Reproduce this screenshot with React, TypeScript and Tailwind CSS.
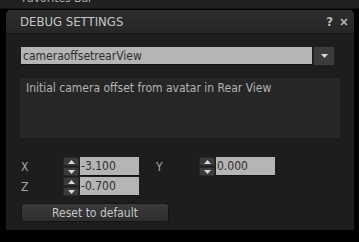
const font = { fontFamily: '"DejaVu Sans Condensed", "DejaVu Sans", sans-serif', fontStretch: 'condensed' };

const Caret = ({ down }: { down?: boolean }) => (
  <svg width="7" height="4" viewBox="0 0 7 4">
    {down ? <path d="M0 0h7L3.5 4z" fill="#d8d8d8" /> : <path d="M0 4h7L3.5 0z" fill="#d8d8d8" />}
  </svg>
);

const Spinner = ({ value }: { value: string }) => (
  <div className="flex h-[19px] items-stretch gap-[1px]">
    <div className="flex w-[16px] flex-col gap-[1px]">
      <div className="flex flex-1 items-center justify-center rounded-t-[2px] bg-[#3a3a3a] border border-[#2a2a2a]">
        <Caret />
      </div>
      <div className="flex flex-1 items-center justify-center rounded-b-[2px] bg-[#3a3a3a] border border-[#2a2a2a]">
        <Caret down />
      </div>
    </div>
    <div className="flex w-[59px] items-center bg-[#b5b5b5] pl-[1px] text-[12px] text-[#2e2e2e] border-b border-[#111]">
      {value}
    </div>
  </div>
);

export default function App() {
  return (
    <div className="relative h-[242px] w-[359px] overflow-hidden bg-black" style={font}>
      <div className="h-[9px] overflow-hidden border-b border-[#141414] bg-[#212121]">
        <div className="-mt-[9px] pl-[22px] text-[12px] leading-[14px] text-[#b0b0b0]">Favorites Bar</div>
      </div>
      <div className="ml-[6px] mt-[1px] h-[220px] w-[348px] overflow-hidden rounded-t-[5px] bg-[#1d1d1d]">
        <div className="flex h-[24px] items-center justify-between border-b border-[#141414] bg-gradient-to-b from-[#2e2e2e] to-[#262626] pl-[14px] pr-[6px]">
          <span className="text-[13px] text-[#c6c6c6]">DEBUG SETTINGS</span>
          <div className="flex items-center gap-[7px] text-[#bdbdbd]">
            <span className="text-[13px] font-bold">?</span>
            <svg width="8" height="8" viewBox="0 0 8 8">
              <path d="M1 1l6 6M7 1L1 7" stroke="#bdbdbd" strokeWidth="1.6" />
            </svg>
          </div>
        </div>
        <div className="px-[14px] pt-[12px]">
          <div className="flex items-center gap-[1px] pl-[1px]">
            <div className="flex h-[18px] w-[291px] items-center bg-[#b5b5b5] pl-[2px] text-[12px] text-[#2e2e2e] border-b border-[#111]">
              cameraoffsetrearView
            </div>
            <div className="flex h-[20px] w-[22px] items-center justify-center rounded-[2px] border border-[#222] bg-[#3c3c3c]">
              <Caret down />
            </div>
          </div>
          <div className="mt-[12px] h-[60px] w-[320px] bg-[#262626] px-[6px] pt-[1px] text-[12px] text-[#b4b4b4]">
            Initial camera offset from avatar in Rear View
          </div>
          <div className="mt-[19px] flex gap-[1px]">
            <div className="flex w-[42px] flex-col gap-[1px] text-[12px] text-[#a8a8a8]">
              <div className="flex h-[19px] items-center pl-[1px]">X</div>
              <div className="flex h-[19px] items-center pl-[1px]">Z</div>
            </div>
            <div className="flex flex-col gap-[1px]">
              <Spinner value="-3.100" />
              <Spinner value="-0.700" />
            </div>
            <div className="ml-[16px] flex w-[42px] text-[12px] text-[#a8a8a8]">
              <div className="flex h-[19px] items-center">Y</div>
            </div>
            <div>
              <Spinner value="0.000" />
            </div>
          </div>
          <button className="mt-[7px] ml-[1px] flex h-[19px] w-[148px] items-center justify-center rounded-[3px] border border-[#141414] bg-gradient-to-b from-[#3a3a3a] to-[#2e2e2e] text-[12px] text-[#c8c8c8]">
            Reset to default
          </button>
        </div>
      </div>
    </div>
  );
}
